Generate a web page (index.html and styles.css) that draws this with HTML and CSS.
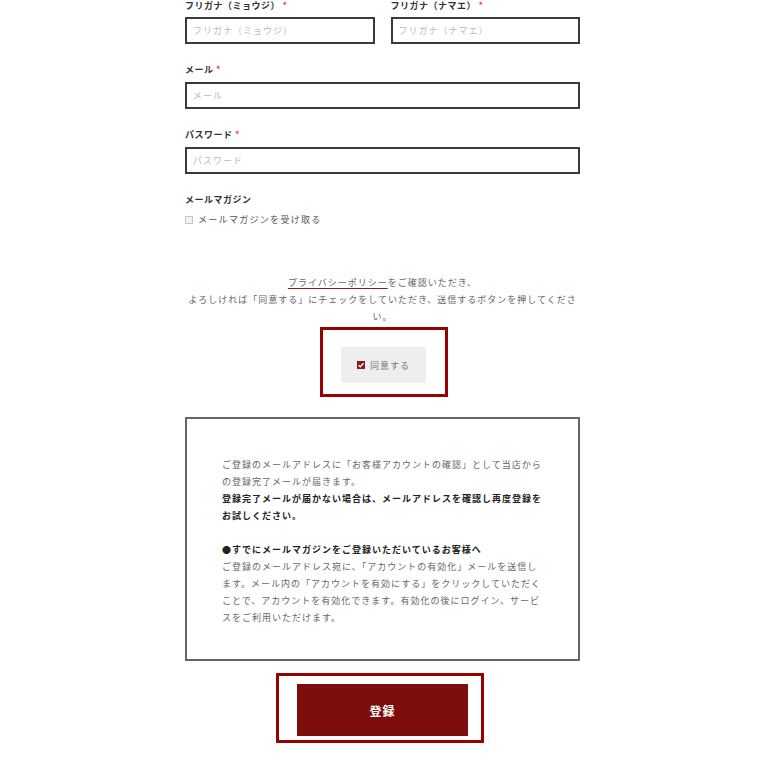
FILE: index.html
```html
<!DOCTYPE html>
<html lang="ja">
<head>
  <meta charset="UTF-8">
  <title>会員登録</title>
  <link rel="stylesheet" href="styles.css">
</head>
<body>
  <form class="form">
    <div class="cols">
      <div class="field">
        <label class="label">フリガナ（ミョウジ） <span class="req">*</span></label>
        <input type="text" class="input" placeholder="フリガナ（ミョウジ）">
      </div>
      <div class="field">
        <label class="label">フリガナ（ナマエ） <span class="req">*</span></label>
        <input type="text" class="input" placeholder="フリガナ（ナマエ）">
      </div>
    </div>

    <div class="field">
      <label class="label">メール <span class="req">*</span></label>
      <input type="email" class="input" placeholder="メール">
    </div>

    <div class="field">
      <label class="label">パスワード <span class="req">*</span></label>
      <input type="password" class="input" placeholder="パスワード">
    </div>

    <div class="field">
      <div class="label">メールマガジン</div>
      <div class="check-row">
        <span class="box"></span>
        <span>メールマガジンを受け取る</span>
      </div>
    </div>

    <!-- 同意 -->
    <p class="privacy">
      <a href="#" class="policy">プライバシーポリシー</a>をご確認いただき、<br>
      よろしければ「同意する」にチェックをしていただき、送信するボタンを押してください。
    </p>

    <div class="agree-wrap">
      <div class="agree-outline">
        <div class="agree">
          <span class="box checked">
            <svg width="8" height="8" viewBox="0 0 8 8"><path d="M1.6 4.2 L3.3 5.8 L6.5 2.2" fill="none" stroke="#fff" stroke-width="1.3"/></svg>
          </span>
          <span>同意する</span>
        </div>
      </div>
    </div>

    <div class="notice">
      <p>ご登録のメールアドレスに「お客様アカウントの確認」として当店からの登録完了メールが届きます。<br>
      <b>登録完了メールが届かない場合は、メールアドレスを確認し再度登録をお試しください。</b></p>
      <p><b>●すでにメールマガジンをご登録いただいているお客様へ</b><br>
      ご登録のメールアドレス宛に、「アカウントの有効化」メールを送信します。メール内の「アカウントを有効にする」をクリックしていただくことで、アカウントを有効化できます。有効化の後にログイン、サービスをご利用いただけます。</p>
    </div>

    <div class="submit-wrap">
      <div class="submit-outline">
        <button type="button" class="submit">登録</button>
      </div>
    </div>
  </form>
</body>
</html>
```

FILE: styles.css
```css
body { margin: 0; font-family: "Noto Sans CJK JP", "Noto Sans", sans-serif; color: #666; background: #fff; }
.form { width: 395px; margin: 0 0 0 185px; }
.cols { display: grid; grid-template-columns: 1fr 1fr; gap: 16px; }
.cols .label { margin-bottom: 5px; }
.field { margin-bottom: 20px; }
.label { display: block; font-size: 9px; line-height: 12px; font-weight: bold; color: #333; margin-bottom: 6px; letter-spacing: 0.5px; }
.req { color: #e44; }
.input { display: block; box-sizing: border-box; width: 100%; height: 27px; border: 2px solid #3a3a3a; padding: 0 6px; font-family: inherit; font-size: 9px; letter-spacing: 1px; outline: none; }
.input::placeholder { color: #bbb; }
.check-row { display: flex; align-items: center; gap: 5px; margin-top: 8px; font-size: 9px; line-height: 12px; letter-spacing: 1.3px; color: #555; }
.box { display: inline-flex; align-items: center; justify-content: center; box-sizing: border-box; width: 8px; height: 8px; border: 1px solid #c4c4c4; background: #f2f2f2; }
.box.checked { border: none; background: #8b1a1a; }
.privacy { margin: 48px 0 0; font-size: 9px; line-height: 17px; letter-spacing: 1px; text-align: center; color: #666; }
.policy { color: #666; text-decoration: underline; text-decoration-color: #8b1a1a; text-underline-offset: 2px; }
.agree-wrap { display: flex; justify-content: center; margin-top: 2px; }
.agree-outline { border: 3px solid #990000; padding: 17px 19px 11px 18px; margin-left: 3px; }
.agree { display: flex; align-items: center; justify-content: center; gap: 5px; width: 85px; height: 36px; background: #eeeeee; font-size: 9px; letter-spacing: 1px; color: #777; }
.notice { margin-top: 20px; border: 2px solid #666; padding: 37px 35px 33px; font-size: 9px; line-height: 17px; letter-spacing: 1px; color: #666; }
.notice p { margin: 0; width: 322px; }
.notice p + p { margin-top: 17px; }
.notice b { color: #222; }
.submit-wrap { display: flex; justify-content: center; margin-top: 12px; }
.submit-outline { border: 3px solid #990000; padding: 8px 13px 4px 18px; margin-right: 5px; }
.submit { display: block; width: 171px; height: 52px; border: none; background: #7d0c0c; color: #fff; font-family: inherit; font-size: 12px; font-weight: bold; letter-spacing: 1px; cursor: pointer; }
```
